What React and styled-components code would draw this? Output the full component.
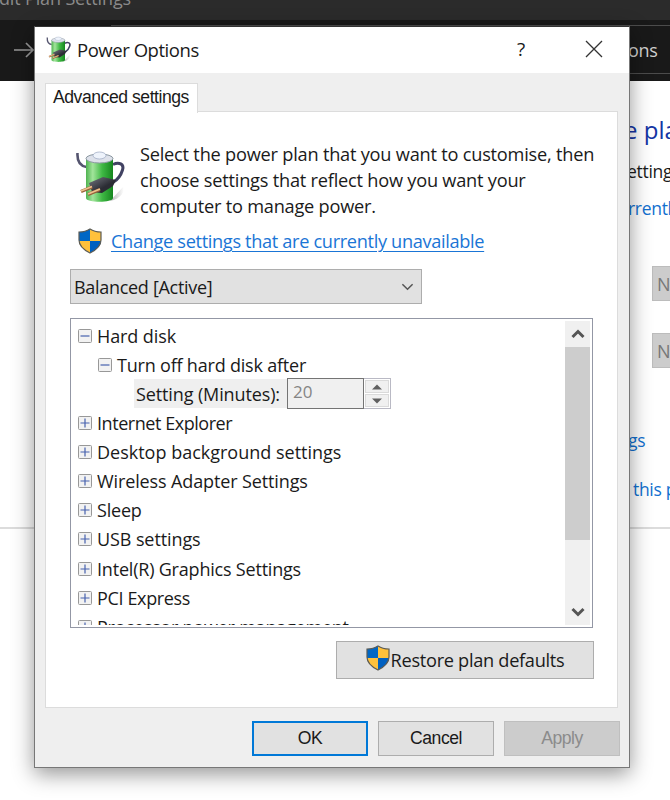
import React from 'react'
import styled, { createGlobalStyle } from 'styled-components'

const GlobalStyle = createGlobalStyle`
  * {
    box-sizing: border-box;
  }
  body {
    margin: 0;
    overflow: hidden;
    background-color: #fff;
  }
`

const Screen = styled.div`
  position: relative;
  width: 670px;
  height: 800px;
  overflow: hidden;
  font-family: 'Open Sans', 'Noto Sans', sans-serif;
  font-size: 18px;
  color: #1a1a1a;
  white-space: nowrap;
`

/* window behind the dialog */

const BackTitle = styled.div`
  height: 20px;
  background-color: #2b2b2b;
  color: #8a8a8a;
  font-size: 18px;
  line-height: 24px;
  overflow: hidden;

  span {
    display: block;
    margin-top: -14px;
    margin-left: -1px;
    letter-spacing: -0.15px;
  }
`

const BackNav = styled.div`
  height: 61px;
  padding: 5px 0 7px 14px;
  display: flex;
  justify-content: space-between;
  background-color: #191919;
`

const BackArrow = styled.svg`
  width: 22px;
  height: 20px;
  margin-top: 15px;
`

const AddressBar = styled.div`
  width: 559px;
  height: 49px;
  padding-left: 516px;
  border: 1px solid #4c4c4c;
  border-right: none;
  color: #d0d0d0;
  letter-spacing: -0.3px;
  line-height: 48px;
`

const BackPage = styled.div`
  height: 719px;
  padding: 32px 0 0 600px;
  background-color: #fff;
  overflow: hidden;
`

const BackText = styled.div`
  height: 26px;
  margin-top: ${(p) => p.$top}px;
  padding-left: ${(p) => p.$indent}px;
  font-size: 17.5px;
  letter-spacing: -0.3px;
  line-height: 26px;
  color: ${(p) => p.$color || '#1270cf'};
`

const BackHeading = styled.div`
  height: 34px;
  padding-left: 24px;
  color: #1536a5;
  font-size: 24px;
  line-height: 33px;
`

const BackSelect = styled.div`
  width: 40px;
  height: 35px;
  margin: ${(p) => p.$top}px 0 0 52px;
  padding-left: 4px;
  background-color: #ccc;
  border: 1px solid #bcbcbc;
  color: #777;
  line-height: 34px;
`

const BackRule = styled.div`
  height: 2px;
  margin: 25px 0 0 -600px;
  background-color: #dcdcdc;
`

/* dialog */

const Dialog = styled.div`
  position: absolute;
  left: 34px;
  top: 26px;
  width: 596px;
  height: 742px;
  display: flex;
  flex-direction: column;
  background-color: #efefef;
  border: 1px solid #777;
  border-top-color: #333;
  box-shadow: 0 6px 20px rgba(0, 0, 0, 0.42);
`

const TitleBar = styled.div`
  height: 46px;
  flex: none;
  display: flex;
  align-items: center;
  padding: 0 26px 2px 11px;
  background-color: #fff;
`

const Title = styled.div`
  flex: 1;
  margin-left: 5px;
  font-size: 18.5px;
  letter-spacing: -0.45px;
`

const HelpButton = styled.div`
  width: 20px;
  margin-right: 54px;
  text-align: center;
  font-size: 19px;
`

const TabList = styled.div`
  height: 39px;
  padding: 10px 0 0 10px;
  flex: none;
`

const Tab = styled.div`
  position: relative;
  z-index: 1;
  width: 153px;
  height: 30px;
  padding-left: 7px;
  background-color: #fff;
  border: 1px solid #dcdcdc;
  border-bottom: none;
  font-family: 'Liberation Sans', Arial, sans-serif;
  font-size: 17.6px;
  letter-spacing: -0.46px;
  line-height: 27px;
`

const TabPanel = styled.div`
  height: 597px;
  flex: none;
  margin: -1px 11px 0 10px;
  padding: 29px 23px 0 24px;
  background-color: #fff;
  border: 1px solid #dcdcdc;
`

const Intro = styled.div`
  display: flex;
  height: 84px;

  svg {
    flex: none;
    margin: 9px 0 0 6px;
  }
`

const IntroText = styled.p`
  margin: 0 0 0 14px;
  font-size: 18.2px;
  letter-spacing: -0.22px;
  line-height: 26px;
`

const LinkRow = styled.div`
  display: flex;
  align-items: center;
  height: 32px;
  padding-left: 8px;
`

const Link = styled.a`
  margin-left: 9px;
  color: #1a75d6;
  font-size: 18.2px;
  letter-spacing: -0.34px;
  text-decoration: underline;
  text-underline-offset: 3px;
  text-decoration-thickness: 1px;
`

const Select = styled.div`
  width: 352px;
  height: 35px;
  margin-top: 12px;
  padding: 0 7px 0 3px;
  display: flex;
  align-items: center;
  justify-content: space-between;
  background-color: #e1e1e1;
  border: 1px solid #adadad;
  letter-spacing: -0.3px;
`

const TreeBox = styled.div`
  display: flex;
  justify-content: space-between;
  width: 523px;
  height: 310px;
  margin-top: 14px;
  padding: 2px;
  border: 1px solid #9397a5;
`

const Tree = styled.div`
  flex: 1;
  overflow: hidden;
`

const TreeRow = styled.div`
  display: flex;
  align-items: center;
  height: 29.13px;
  padding-left: ${(p) => 5 + p.$level * 20}px;
`

const Toggle = styled.svg`
  width: 14px;
  height: 14px;
  margin-right: 5px;
  flex: none;
`

const TreeLabel = styled.span`
  letter-spacing: ${(p) => p.$spacing || 0}px;
`

const SettingRow = styled.div`
  display: flex;
  align-items: center;
  height: 29.13px;
  padding-left: 61px;
`

const SettingLabel = styled.div`
  width: 153px;
  height: 29px;
  padding-left: 2px;
  background-color: #efefef;
  letter-spacing: -0.12px;
  line-height: 30px;
`

const NumberBox = styled.div`
  width: 77px;
  height: 31px;
  padding-left: 5px;
  background-color: #f0f0f0;
  border: 1px solid #747474;
  color: #858585;
  font-size: 17px;
  line-height: 26px;
`

const Spinner = styled.div`
  width: 27px;
  height: 31px;
  display: flex;
  flex-direction: column;
  gap: 1px;
  padding: 1px;
  border: 1px solid #b9b9c4;
  border-left: none;
  background-color: #fff;
`

const SpinButton = styled.div`
  flex: 1;
  display: flex;
  align-items: center;
  justify-content: center;
  background-color: #f0f0f0;
  border: 1px solid #dadada;
`

const ScrollBar = styled.div`
  width: 25px;
  display: flex;
  flex-direction: column;
  background-color: #f0f0f0;
`

const ScrollButton = styled.div`
  height: 26px;
  display: flex;
  align-items: center;
  justify-content: center;
`

const ScrollThumb = styled.div`
  height: 193px;
  margin-bottom: auto;
  background-color: #cdcdcd;
`

const Button = styled.button`
  width: ${(p) => p.$width || 116}px;
  height: ${(p) => p.$height || 35}px;
  padding: 0;
  display: flex;
  align-items: center;
  justify-content: center;
  background-color: ${(p) => (p.disabled ? '#ccc' : '#e1e1e1')};
  border: ${(p) => (p.$primary ? '2px solid #0078d7' : '1px solid #adadad')};
  border-color: ${(p) => p.disabled && '#bfbfbf'};
  color: ${(p) => (p.disabled ? '#8b8b8b' : '#1a1a1a')};
  font-family: 'Liberation Sans', Arial, sans-serif;
  font-size: 17.6px;
  letter-spacing: -0.5px;
`

const RestoreButton = styled(Button)`
  margin: 13px 0 0 266px;
  font-family: inherit;
  font-size: 18.2px;
  letter-spacing: -0.3px;

  svg {
    margin: 0 1px 4px 0;
  }
`

const Footer = styled.div`
  display: flex;
  gap: 10px;
  justify-content: flex-end;
  padding: 13px 9px 0 0;
`

const ShieldIcon = () => (
  <svg width='24' height='26' viewBox='0 0 24 26'>
    <path d='M12 1C9 3 5 4 1 4v9h11z' fill='#0067c5' />
    <path d='M12 1c3 2 7 3 11 3v9H12z' fill='#ffc13b' />
    <path d='M1 13h11v12C6 22 1 18 1 13z' fill='#ffc13b' />
    <path d='M23 13H12v12c6-3 11-7 11-12z' fill='#0060c0' />
    <path
      d='M12 1C9 3 5 4 1 4v8c0 6 5 10 11 13 6-3 11-7 11-13V4C19 4 15 3 12 1z'
      fill='none'
      stroke='#5b5b55'
      strokeWidth='1.2'
    />
  </svg>
)

const BatteryIcon = ({ width, height }) => (
  <svg width={width} height={height} viewBox='0 0 50 54'>
    <defs>
      <linearGradient id='cell' x1='0' x2='1'>
        <stop offset='0' stopColor='#4fb350' />
        <stop offset='0.25' stopColor='#a2e49b' />
        <stop offset='0.6' stopColor='#3fb944' />
        <stop offset='1' stopColor='#16861f' />
      </linearGradient>
      <linearGradient id='plug' x1='0' x2='1' y2='1'>
        <stop offset='0' stopColor='#777983' />
        <stop offset='0.6' stopColor='#2b2c34' />
      </linearGradient>
      <linearGradient id='shade' x1='0' x2='1'>
        <stop offset='0' stopColor='#b5b5b5' />
        <stop offset='1' stopColor='#fff' />
      </linearGradient>
    </defs>
    <path d='M34 51l13-14c3 3-2 12-13 14z' fill='url(#shade)' />
    <path d='M1.5 3c-.5 8 2 13 9 14' fill='none' stroke='#55556f' strokeWidth='2.6' />
    <path
      d='M37 14.5c6-3 11.500-.5 9.500 5.500-1.500 5-4 9-9 12'
      fill='none'
      stroke='#414262'
      strokeWidth='3'
    />
    <path d='M10 8v40c0 5 27 5 27 0V8z' fill='url(#cell)' />
    <ellipse cx='23.500' cy='8.500' rx='13.500' ry='4.500' fill='#dde1ea' stroke='#8d99a2' />
    <ellipse cx='23.500' cy='5.500' rx='6.500' ry='3.500' fill='#eef3fb' stroke='#9aa6c0' strokeWidth='0.7' />
    <path d='M13 33l14-6 13 3-3 6-11 7-10-1z' fill='url(#plug)' />
    <path d='M5 41.500l11-4.500M12 44.500l12-5' stroke='#98603a' strokeWidth='3.400' />
    <path d='M5 41l11-4.500M12 44l12-5' stroke='#edc28e' strokeWidth='1.800' />
  </svg>
)

const ToggleIcon = ({ open }) => (
  <Toggle viewBox='0 0 14 14'>
    <rect x='0.5' y='0.5' width='13' height='13' rx='1' fill='#f2f2f2' stroke='#989898' />
    <path
      d={open ? 'M2.5 7h9' : 'M2.5 7h9M7 2.5v9'}
      stroke='#4661ad'
      strokeWidth='1.2'
    />
  </Toggle>
)

const Chevron = ({ up, width = 14, stroke = 3 }) => (
  <svg width={width} height='10' viewBox='0 0 14 10'>
    <path
      d={up ? 'M1.5 8L7 2.5 12.5 8' : 'M1.5 2L7 7.5 12.5 2'}
      fill='none'
      stroke='#555'
      strokeWidth={stroke}
    />
  </svg>
)

const Triangle = ({ up }) => (
  <svg width='10' height='6' viewBox='0 0 10 6'>
    <path d={up ? 'M0 5.5L5 0.5l5 5z' : 'M0 0.5l5 5 5-5z'} fill='#606060' />
  </svg>
)

const collapsedItems = [
  { name: 'Internet Explorer', spacing: -0.45 },
  { name: 'Desktop background settings', spacing: 0 },
  { name: 'Wireless Adapter Settings', spacing: -0.12 },
  { name: 'Sleep', spacing: -0.2 },
  { name: 'USB settings', spacing: -0.1 },
  { name: 'Intel(R) Graphics Settings', spacing: -0.2 },
  { name: 'PCI Express', spacing: -0.35 },
  { name: 'Processor power management', spacing: -0.22 },
]

const App = () => (
  <Screen>
    <GlobalStyle />
    <BackTitle>
      <span>dit Plan Settings</span>
    </BackTitle>
    <BackNav>
      <BackArrow viewBox='0 0 22 20'>
        <path d='M0 10h19M12 3l7 7-7 7' fill='none' stroke='#999' strokeWidth='1.7' />
      </BackArrow>
      <AddressBar>ons</AddressBar>
    </BackNav>
    <BackPage>
      <BackHeading>e plan</BackHeading>
      <BackText $top={11} $indent={27} $color='#1a1a1a'>
        ettings
      </BackText>
      <BackText $top={11} $indent={28}>
        rrently
      </BackText>
      <BackSelect $top={45}>Never</BackSelect>
      <BackSelect $top={32}>Never</BackSelect>
      <BackText $top={59} $indent={28}>
        gs
      </BackText>
      <BackText $top={23} $indent={33}>
        this plan
      </BackText>
      <BackRule />
    </BackPage>

    <Dialog>
      <TitleBar>
        <BatteryIcon width='26' height='27' />
        <Title>Power Options</Title>
        <HelpButton>?</HelpButton>
        <svg width='18' height='18' viewBox='0 0 18 18'>
          <path d='M1 1l16 16M17 1L1 17' stroke='#333' strokeWidth='1.3' />
        </svg>
      </TitleBar>
      <TabList>
        <Tab>Advanced settings</Tab>
      </TabList>
      <TabPanel>
        <Intro>
          <BatteryIcon width='50' height='54' />
          <IntroText>
            Select the power plan that you want to customise, then
            <br />
            choose settings that reflect how you want your
            <br />
            computer to manage power.
          </IntroText>
        </Intro>
        <LinkRow>
          <ShieldIcon />
          <Link>Change settings that are currently unavailable</Link>
        </LinkRow>
        <Select>
          <span>Balanced [Active]</span>
          <Chevron width={13} stroke={1.6} />
        </Select>
        <TreeBox>
          <Tree>
            <TreeRow $level={0}>
              <ToggleIcon open />
              <TreeLabel $spacing={-0.1}>Hard disk</TreeLabel>
            </TreeRow>
            <TreeRow $level={1}>
              <ToggleIcon open />
              <TreeLabel $spacing={-0.2}>Turn off hard disk after</TreeLabel>
            </TreeRow>
            <SettingRow>
              <SettingLabel>Setting (Minutes):</SettingLabel>
              <NumberBox>20</NumberBox>
              <Spinner>
                <SpinButton>
                  <Triangle up />
                </SpinButton>
                <SpinButton>
                  <Triangle />
                </SpinButton>
              </Spinner>
            </SettingRow>
            {collapsedItems.map(({ name, spacing }) => (
              <TreeRow key={name} $level={0}>
                <ToggleIcon />
                <TreeLabel $spacing={spacing}>{name}</TreeLabel>
              </TreeRow>
            ))}
          </Tree>
          <ScrollBar>
            <ScrollButton>
              <Chevron up />
            </ScrollButton>
            <ScrollThumb />
            <ScrollButton>
              <Chevron />
            </ScrollButton>
          </ScrollBar>
        </TreeBox>
        <RestoreButton $width={258} $height={38}>
          <ShieldIcon />
          Restore plan defaults
        </RestoreButton>
      </TabPanel>
      <Footer>
        <Button $primary>OK</Button>
        <Button>Cancel</Button>
        <Button disabled>Apply</Button>
      </Footer>
    </Dialog>
  </Screen>
)

export default App
